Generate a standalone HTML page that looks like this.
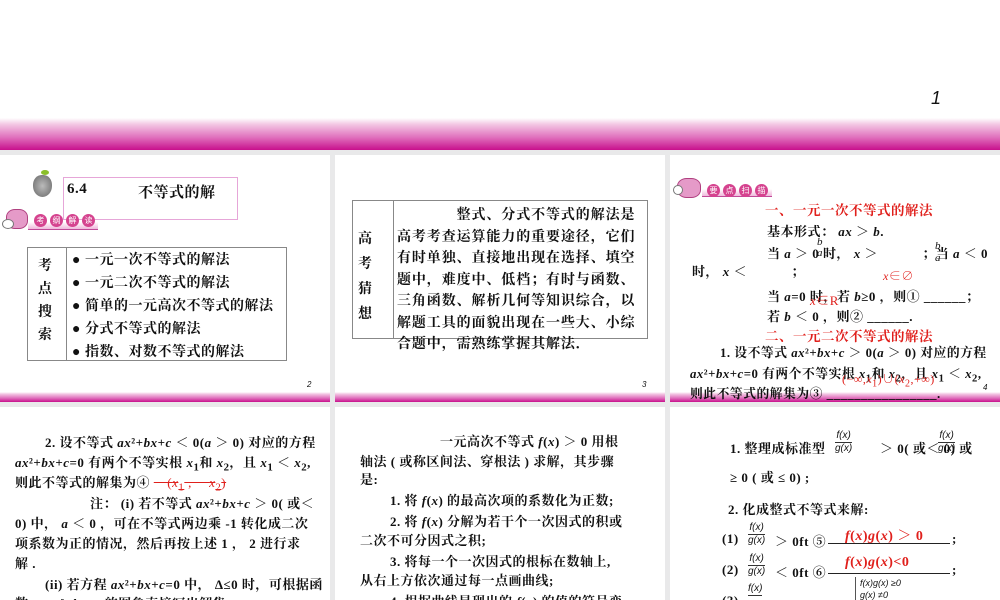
<!DOCTYPE html>
<html><head><meta charset="utf-8">
<style>
*{margin:0;padding:0;box-sizing:border-box}
body{width:1000px;height:600px;overflow:hidden;background:#e9e9ea;position:relative;font-family:"Liberation Serif","Noto Serif CJK SC",serif;color:#111}
.a{position:absolute}
.slide{position:absolute;background:#fff;overflow:hidden}
.band{position:absolute;left:0;right:0;background:linear-gradient(#fff 0%,#f3c6e3 20%,#e071bd 60%,#c8108c 100%)}
.t{position:absolute;white-space:nowrap;font-size:14px;font-weight:bold;letter-spacing:0.5px}
.r{color:#e0201c}
.pn{position:absolute;font-size:8px;font-style:italic;font-family:"Liberation Sans",sans-serif}
i{font-style:italic}
.bub{display:inline-block;width:13px;height:13px;border-radius:50%;background:#d5438f;color:#fff;font-size:8px;line-height:13px;text-align:center;margin-right:3px;font-family:"Noto Sans CJK SC",sans-serif}
</style></head><body>
<div class="slide" style="left:0;top:0;width:1000px;height:150px">
  <div class="band" style="top:118px;height:32px"></div>
  <div class="a" style="left:931px;top:88px;font:italic 18px 'Liberation Sans',sans-serif">1</div>
</div>

<div class="slide" style="left:0;top:155px;width:330px;height:247px">
  <div class="band" style="top:237px;height:10px"></div>
  <div class="a" style="left:33px;top:20px;width:19px;height:22px;border-radius:45% 45% 50% 50%;background:radial-gradient(#bbb,#666)"></div>
  <div class="a" style="left:41px;top:15px;width:8px;height:5px;border-radius:50%;background:#8bbf2a"></div>
  <div class="a" style="left:63px;top:22px;width:175px;height:43px;border:1px solid #e6a6d8"></div>
  <div class="t" style="left:67px;top:26px;font-size:15px">6.4</div>
  <div class="t" style="left:138px;top:26px;font-size:15px">不等式的解</div>
  <div class="a" style="left:6px;top:54px;width:22px;height:20px;border-radius:40%;background:#e59ac8;border:1px solid #b04080"></div>
  <div class="a" style="left:2px;top:64px;width:12px;height:10px;border-radius:50%;border:1px solid #777;background:#fff"></div>
  <div class="a" style="left:28px;top:67px;width:70px;height:8px;background:linear-gradient(#fff,#f0b8dc);border-bottom:1px solid #c04a98"></div>
  <div class="a" style="left:34px;top:55px"><span class="bub">考</span><span class="bub">纲</span><span class="bub">解</span><span class="bub">读</span></div>
  <div class="a" style="left:27px;top:92px;width:260px;height:114px;border:1px solid #888"></div>
  <div class="a" style="left:66px;top:92px;width:1px;height:114px;background:#888"></div>
  <div class="t" style="left:38px;top:100px;line-height:23px;white-space:normal;width:16px">考点搜索</div>
  <div class="t" style="left:72px;top:94px;line-height:23px">● 一元一次不等式的解法<br>● 一元二次不等式的解法<br>● 简单的一元高次不等式的解法<br>● 分式不等式的解法<br>● 指数、对数不等式的解法</div>
  <div class="pn" style="left:307px;top:225px">2</div>
</div>

<div class="slide" style="left:335px;top:155px;width:330px;height:247px">
  <div class="band" style="top:237px;height:10px"></div>
  <div class="a" style="left:17px;top:45px;width:296px;height:139px;border:1px solid #888"></div>
  <div class="a" style="left:58px;top:45px;width:1px;height:139px;background:#888"></div>
  <div class="t" style="left:23px;top:72px;line-height:25px;white-space:normal;width:16px">高考猜想</div>
  <div class="t" style="left:62px;top:50px;line-height:21.5px;letter-spacing:0.9px">　　　　整式、分式不等式的解法是<br>高考考查运算能力的重要途径，它们<br>有时单独、直接地出现在选择、填空<br>题中，难度中、低档；有时与函数、<br>三角函数、解析几何等知识综合，以<br>解题工具的面貌出现在一些大、小综<br>合题中，需熟练掌握其解法．</div>
  <div class="pn" style="left:307px;top:225px">3</div>
</div>

<div class="slide" style="left:670px;top:155px;width:330px;height:247px">
  <div class="band" style="top:237px;height:10px"></div>
  <div class="a" style="left:7px;top:23px;width:24px;height:20px;border-radius:40%;background:#e59ac8;border:1px solid #b04080"></div>
  <div class="a" style="left:3px;top:30px;width:10px;height:10px;border-radius:50%;border:1px solid #777;background:#fff"></div>
  <div class="a" style="left:32px;top:34px;width:70px;height:8px;background:linear-gradient(#fff,#f0b8dc);border-bottom:1px solid #c04a98"></div>
  <div class="a" style="left:37px;top:25px"><span class="bub">要</span><span class="bub">点</span><span class="bub">扫</span><span class="bub">描</span></div>
  <div class="t r" style="left:95px;top:44px;font-size:13.5px">一、一元一次不等式的解法</div>
  <div class="t" style="left:97px;top:66px;font-size:13px">基本形式： <i>ax</i> ＞ <i>b</i>.</div>
  <div class="t" style="left:97px;top:88px;font-size:13px">当 <i>a</i> ＞ 0 时， <i>x</i> ＞ 　　　；当 <i>a</i> ＜ 0</div>
  <div class="a" style="left:147px;top:82px;font:italic 11px 'Liberation Serif',serif;line-height:11px;text-align:center">b<br>a</div>
  <div class="a" style="left:265px;top:85px;font:italic 11px 'Liberation Serif',serif;line-height:12px;text-align:center">b<br>a</div>
  <div class="t" style="left:22px;top:106px;font-size:13px">时， <i>x</i> ＜　　　 ；</div>
  <div class="t r" style="left:213px;top:112px;font-size:12px;font-weight:normal"><i>x</i>∈∅</div>
  <div class="t" style="left:97px;top:131px;font-size:13px">当 <i>a</i>=0 时，若 <i>b</i>≥0 ，则① ______；</div>
  <div class="t r" style="left:140px;top:135px;font-size:13px;font-weight:normal"><i>x</i>∈R</div>
  <div class="t" style="left:97px;top:151px;font-size:13px">若 <i>b</i> ＜ 0 ，则② ______.</div>
  <div class="t r" style="left:95px;top:170px;font-size:13.5px">二、一元二次不等式的解法</div>
  <div class="t" style="left:50px;top:192px;font-size:12.8px;line-height:13px">1. 设不等式 <i>ax</i>²+<i>bx</i>+<i>c</i> ＞ 0(<i>a</i> ＞ 0) 对应的方程</div>
  <div class="t" style="left:20px;top:213px;font-size:12.8px;line-height:13px"><i>ax</i>²+<i>bx</i>+<i>c</i>=0 有两个不等实根 <i>x</i><sub>1</sub>和 <i>x</i><sub>2</sub>，且 <i>x</i><sub>1</sub> ＜ <i>x</i><sub>2</sub>,</div>
  <div class="t r" style="left:172px;top:218px;font-size:12px;font-weight:normal;line-height:13px">(−∞,<i>x</i><sub>1</sub>)∪(<i>x</i><sub>2</sub>,+∞)</div>
  <div class="t" style="left:20px;top:233px;font-size:12.8px;line-height:13px">则此不等式的解集为③ ________________.</div>
  <div class="pn" style="left:313px;top:228px">4</div>
</div>

<div class="slide" style="left:0;top:407px;width:330px;height:193px">
  <div class="t" style="left:45px;top:25px;font-size:13px">2. 设不等式 <i>ax</i>²+<i>bx</i>+<i>c</i> ＜ 0(<i>a</i> ＞ 0) 对应的方程</div>
  <div class="t" style="left:15px;top:45px;font-size:13px"><i>ax</i>²+<i>bx</i>+<i>c</i>=0 有两个不等实根 <i>x</i><sub>1</sub>和 <i>x</i><sub>2</sub>，且 <i>x</i><sub>1</sub> ＜ <i>x</i><sub>2</sub>,</div>
  <div class="t" style="left:15px;top:65px;font-size:13px">则此不等式的解集为④ <span class="r" style="text-decoration:line-through;font-weight:normal">　(<i>x</i><sub>1</sub> ,　 <i>x</i><sub>2</sub>)</span></div>
  <div class="t" style="left:90px;top:86px;font-size:13px">注： (i) 若不等式 <i>ax</i>²+<i>bx</i>+<i>c</i> ＞ 0( 或＜</div>
  <div class="t" style="left:15px;top:106px;font-size:13px">0) 中， <i>a</i> ＜ 0 ，可在不等式两边乘 -1 转化成二次</div>
  <div class="t" style="left:15px;top:126px;font-size:13px">项系数为正的情况，然后再按上述 1 ， 2 进行求</div>
  <div class="t" style="left:15px;top:146px;font-size:13px">解 .</div>
  <div class="t" style="left:45px;top:167px;font-size:13px">(ii) 若方程 <i>ax</i>²+<i>bx</i>+<i>c</i>=0 中， Δ≤0 时，可根据函</div>
  <div class="t" style="left:15px;top:186px;font-size:13px">数 <i>y</i>=<i>ax</i>²+<i>bx</i>+<i>c</i> 的图象直接写出解集</div>
</div>

<div class="slide" style="left:335px;top:407px;width:330px;height:193px">
  <div class="t" style="left:105px;top:24px;font-size:13px">一元高次不等式 <i>f</i>(<i>x</i>) ＞ 0 用根</div>
  <div class="t" style="left:25px;top:44px;font-size:13px">轴法 ( 或称区间法、穿根法 ) 求解，其步骤</div>
  <div class="t" style="left:25px;top:62px;font-size:13px">是:</div>
  <div class="t" style="left:55px;top:83px;font-size:13px">1. 将 <i>f</i>(<i>x</i>) 的最高次项的系数化为正数;</div>
  <div class="t" style="left:55px;top:104px;font-size:13px">2. 将 <i>f</i>(<i>x</i>) 分解为若干个一次因式的积或</div>
  <div class="t" style="left:25px;top:123px;font-size:13px">二次不可分因式之积;</div>
  <div class="t" style="left:55px;top:144px;font-size:13px">3. 将每一个一次因式的根标在数轴上,</div>
  <div class="t" style="left:25px;top:163px;font-size:13px">从右上方依次通过每一点画曲线;</div>
  <div class="t" style="left:55px;top:184px;font-size:13px">4. 根据曲线显现出的 <i>f</i>(<i>x</i>) 的值的符号变</div>
</div>

<div class="slide" style="left:670px;top:407px;width:330px;height:193px">
  <div class="t" style="left:60px;top:31px;font-size:13px">1. 整理成标准型</div>
  <div class="a" style="left:165px;top:23px;font:italic 10px 'Liberation Sans',sans-serif;line-height:12px;text-align:center"><span style="border-bottom:1px solid #333;display:block">f(x)</span>g(x)</div>
  <div class="t" style="left:210px;top:31px;font-size:13px">＞ 0( 或＜ 0) 或</div>
  <div class="a" style="left:268px;top:23px;font:italic 10px 'Liberation Sans',sans-serif;line-height:12px;text-align:center"><span style="border-bottom:1px solid #333;display:block">f(x)</span>g(x)</div>
  <div class="t" style="left:60px;top:60px;font-size:13px">≥ 0 ( 或 ≤ 0) ;</div>
  <div class="t" style="left:58px;top:92px;font-size:13px">2. 化成整式不等式来解:</div>
  <div class="t" style="left:52px;top:124px;font-size:13px">(1)</div>
  <div class="a" style="left:78px;top:115px;font:italic 10px 'Liberation Sans',sans-serif;line-height:12px;text-align:center"><span style="border-bottom:1px solid #333;display:block">f(x)</span>g(x)</div>
  <div class="t" style="left:105px;top:124px;font-size:13px">＞ 0ft ⑤</div>
  <div class="a" style="left:158px;top:136px;width:122px;height:1px;background:#222"></div>
  <div class="t" style="left:282px;top:124px;font-size:13px">;</div>
  <div class="t r" style="left:175px;top:118px;font-size:14px"><i>f</i>(<i>x</i>)<i>g</i>(<i>x</i>) ＞ 0</div>
  <div class="t" style="left:52px;top:155px;font-size:13px">(2)</div>
  <div class="a" style="left:78px;top:146px;font:italic 10px 'Liberation Sans',sans-serif;line-height:12px;text-align:center"><span style="border-bottom:1px solid #333;display:block">f(x)</span>g(x)</div>
  <div class="t" style="left:105px;top:155px;font-size:13px">＜ 0ft ⑥</div>
  <div class="a" style="left:158px;top:166px;width:122px;height:1px;background:#222"></div>
  <div class="t" style="left:282px;top:155px;font-size:13px">;</div>
  <div class="t r" style="left:175px;top:148px;font-size:14px"><i>f</i>(<i>x</i>)<i>g</i>(<i>x</i>)&lt;0</div>
  <div class="a" style="left:185px;top:170px;width:1px;height:25px;background:#555"></div>
  <div class="a" style="left:190px;top:170px;font:italic 9px 'Liberation Sans',sans-serif;line-height:12px">f(x)g(x) ≥0<br>g(x) ≠0</div>
  <div class="t" style="left:52px;top:186px;font-size:13px">(3)</div>
  <div class="a" style="left:78px;top:176px;font:italic 10px 'Liberation Sans',sans-serif;line-height:12px"><span style="border-bottom:1px solid #333;display:block">f(x)</span></div>
</div>
</body></html>
